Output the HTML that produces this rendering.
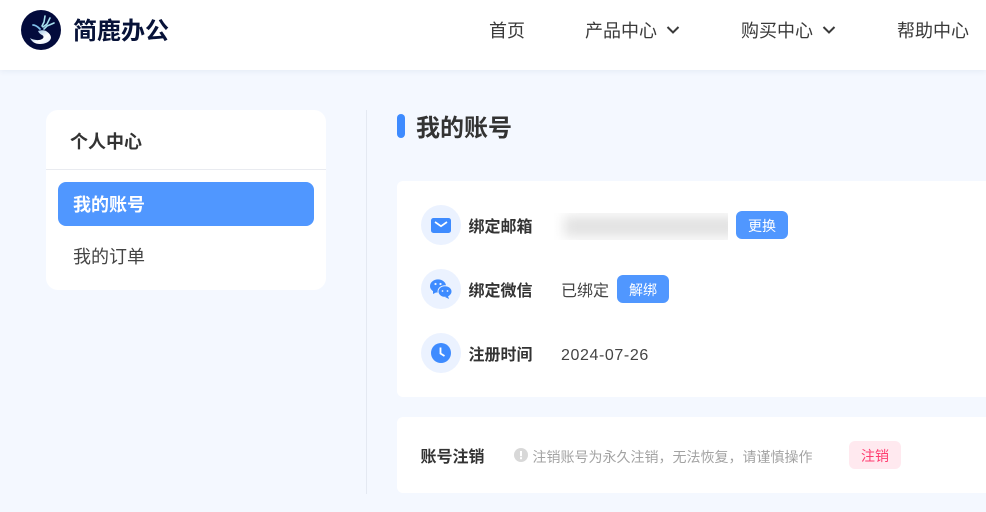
<!DOCTYPE html>
<html lang="zh-CN"><head><meta charset="utf-8"><title>我的账号</title>
<style>
*{box-sizing:border-box;margin:0;padding:0}
html,body{width:986px;height:512px;overflow:hidden;background:#f4f8ff;font-family:"Liberation Sans","Noto Sans CJK SC",sans-serif;color:#333}
.a{position:absolute;white-space:nowrap}
.hd{position:absolute;left:0;top:0;width:986px;height:70px;background:#fff;box-shadow:0 1px 6px rgba(40,60,110,.08)}
.nav{font-size:18px;line-height:24px;top:19px;color:#3a3a3a}
.card{position:absolute;background:#fff}
.ic{position:absolute;left:421px;width:40px;height:40px;border-radius:50%;background:#ebf2ff}
.lb{font-size:16px;font-weight:700;line-height:22px;color:#333}
.v{font-size:16px;line-height:22px;color:#444}
.btn{position:absolute;height:28px;width:52px;border-radius:6px;background:#5097ff;color:#fff;font-size:14px;line-height:30px;text-align:center}
</style></head><body>
<div class="hd"></div>
<svg class="a" style="left:21px;top:10px" width="40" height="40" viewBox="0 0 40 40">
<defs><linearGradient id="lg" x1="0" y1="0" x2="1" y2="1"><stop offset="0" stop-color="#6fa8d8"/><stop offset=".6" stop-color="#fff"/><stop offset="1" stop-color="#dfeaf8"/></linearGradient></defs>
<circle cx="20" cy="20" r="20" fill="#030b3c"/>
<path d="M24 6l-1 6-2 4M29 8l-3 6-4 3M33 13l-7 3-3 3" stroke="#a7e0ee" stroke-width="1.600" fill="none" stroke-linecap="round"/>
<path d="M12 15c2 0 5 2 7 4" stroke="#7fc0ea" stroke-width="1.800" fill="none" stroke-linecap="round"/>
<path d="M17 21c3-1 6-1 8 0 3 2 5 4 5 7-1 4-6 6-11 6-5 0-8-2-10-6 3 2 9 3 12 1 2-1 2-3 0-4-2-1-3-2-4-4z" fill="url(#lg)"/>
</svg>
<div class="a" style="left:73px;top:15px;font-size:24px;line-height:34px;font-weight:700;color:#071238">简鹿办公</div>
<div class="a nav" style="left:489px">首页</div>
<div class="a nav" style="left:585px">产品中心</div>
<svg class="a" style="left:666px;top:25px" width="14" height="10" viewBox="0 0 14 10"><path d="M1.500 2l5.500 5.500L12.500 2" stroke="#3a3a3a" stroke-width="2" fill="none"/></svg>
<div class="a nav" style="left:741px">购买中心</div>
<svg class="a" style="left:822px;top:25px" width="14" height="10" viewBox="0 0 14 10"><path d="M1.500 2l5.500 5.500L12.500 2" stroke="#3a3a3a" stroke-width="2" fill="none"/></svg>
<div class="a nav" style="left:897px">帮助中心</div>

<div class="card" style="left:46px;top:110px;width:280px;height:180px;border-radius:12px"></div>
<div class="a" style="left:46px;top:169px;width:280px;height:1px;background:#e9ebf0"></div>
<div class="a" style="left:70px;top:130px;font-size:18px;line-height:24px;font-weight:700;color:#333">个人中心</div>
<div class="a" style="left:58px;top:182px;width:256px;height:44px;border-radius:8px;background:#5097ff"></div>
<div class="a" style="left:73px;top:193px;font-size:18px;line-height:24px;font-weight:700;color:#fff">我的账号</div>
<div class="a" style="left:73px;top:245px;font-size:18px;line-height:24px;color:#444">我的订单</div>

<div class="a" style="left:366px;top:110px;width:1px;height:384px;background:#e4e9f2"></div>
<div class="a" style="left:397px;top:114px;width:8px;height:24px;border-radius:4px;background:#3e8bff"></div>
<div class="a" style="left:416px;top:113px;font-size:24px;line-height:32px;font-weight:700;color:#333">我的账号</div>

<div class="card" style="left:397px;top:181px;width:600px;height:216px;border-radius:6px"></div>
<div class="ic" style="top:205px"></div>
<svg class="a" style="left:431px;top:218px" width="20" height="15" viewBox="0 0 20 15"><rect width="20" height="15" rx="2.500" fill="#3e8bff"/><path d="M4 4l6 4.200L16 4" stroke="#fff" stroke-width="1.700" fill="none"/></svg>
<div class="a lb" style="left:468.500px;top:217px">绑定邮箱</div>
<div class="a" style="left:554px;top:213px;width:174px;height:27px;background:#fff;overflow:hidden"><div style="position:absolute;left:10px;top:3px;width:175px;height:21px;background:#e2e2e2;filter:blur(6px)"></div></div>
<div class="btn" style="left:736px;top:211px">更换</div>

<div class="ic" style="top:269px"></div>
<svg class="a" style="left:430px;top:279px" width="22" height="20" viewBox="0 0 22 20"><ellipse cx="8" cy="7" rx="8" ry="6.600" fill="#3e8bff"/><path d="M3 11l0 4 4-2z" fill="#3e8bff"/><ellipse cx="15" cy="12.500" rx="7" ry="5.800" fill="#3e8bff" stroke="#ebf2ff" stroke-width="1"/><path d="M18 17l1 3-4-2z" fill="#3e8bff"/><circle cx="5.500" cy="5" r="1.100" fill="#ebf2ff"/><circle cx="10.500" cy="5" r="1.100" fill="#ebf2ff"/><circle cx="12.500" cy="12" r=".9" fill="#ebf2ff"/><circle cx="17.500" cy="12" r=".9" fill="#ebf2ff"/></svg>
<div class="a lb" style="left:468.500px;top:281px">绑定微信</div>
<div class="a v" style="left:561px;top:281px">已绑定</div>
<div class="btn" style="left:617px;top:275px">解绑</div>

<div class="ic" style="top:333px"></div>
<svg class="a" style="left:431px;top:343px" width="20" height="20" viewBox="0 0 20 20"><circle cx="10" cy="10" r="10" fill="#3e8bff"/><path d="M9.500 4.500v6l4 2.500" stroke="#fff" stroke-width="1.800" fill="none"/></svg>
<div class="a lb" style="left:468.500px;top:345px">注册时间</div>
<div class="a v" style="left:561px;top:345px;letter-spacing:.6px">2024-07-26</div>

<div class="card" style="left:397px;top:417px;width:600px;height:76px;border-radius:6px"></div>
<div class="a lb" style="left:420.500px;top:447px;color:#333">账号注销</div>
<svg class="a" style="left:514px;top:448px" width="14" height="14" viewBox="0 0 14 14"><circle cx="7" cy="7" r="7" fill="#d8d8d8"/><rect x="6" y="3" width="2" height="5.200" fill="#fff"/><rect x="6" y="9.200" width="2" height="2" fill="#fff"/></svg>
<div class="a" style="left:532.500px;top:446.500px;font-size:14px;line-height:20px;color:#a3a3a3">注销账号为永久注销，无法恢复，请谨慎操作</div>
<div class="a" style="left:849px;top:441px;width:52px;height:28px;border-radius:6px;background:#ffe9ef;color:#ff3d70;font-size:14px;line-height:30px;text-align:center">注销</div>
</body></html>
